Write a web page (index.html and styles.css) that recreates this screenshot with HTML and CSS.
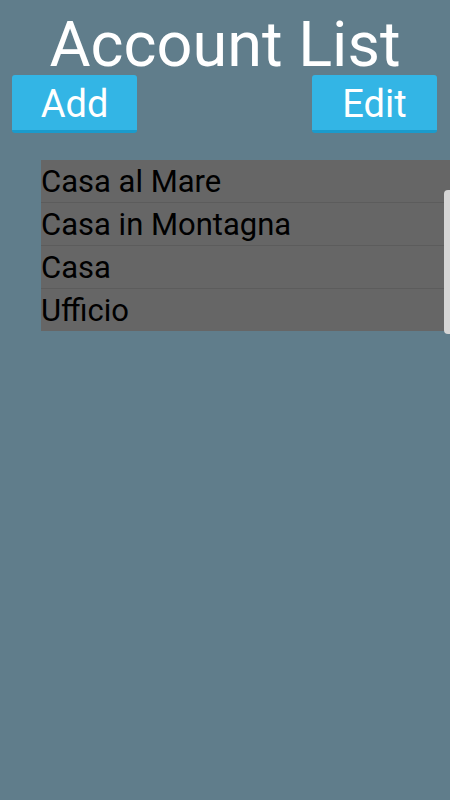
FILE: index.html
```html
<!DOCTYPE html>
<html lang="en">

<head>
    <meta charset="UTF-8">
    <meta name="viewport" content="width=device-width, initial-scale=1">
    <title>Account List</title>
    <link rel="stylesheet" href="styles.css">
</head>

<body>

    <h1 class="title">Account List</h1>

    <div class="actions">
        <button class="action-btn">Add</button>
        <button class="action-btn">Edit</button>
    </div>

    <div class="list-wrap">
        <ul class="account-list">
            <li>Casa al Mare</li>
            <li>Casa in Montagna</li>
            <li>Casa</li>
            <li>Ufficio</li>
        </ul>
        <div class="scroll-thumb"></div>
    </div>

</body>

</html>
```

FILE: styles.css
```css
html,
body {
    margin: 0;
    padding: 0;
    height: 100%;
}

body {
    font-family: Roboto, "Liberation Sans", sans-serif;
    background-color: #607d8b;
}

.title {
    margin: 0;
    padding-top: 10px;
    height: 65px;
    text-align: center;
    color: #fff;
    font-weight: normal;
    font-size: 63px;
    line-height: 70px;
}

.actions {
    display: flex;
    justify-content: space-between;
    padding: 0 13px 0 12px;
}

.action-btn {
    width: 125px;
    height: 58px;
    background-color: #33b5e5;
    color: #fff;
    border: none;
    border-bottom: 3px solid #1a9bcc;
    border-radius: 3px;
    font-family: Roboto, "Liberation Sans", sans-serif;
    font-size: 38px;
    line-height: 58px;
    padding: 0;
}

.list-wrap {
    position: relative;
    margin: 27px 0 0 41px;
}

.account-list {
    list-style: none;
    margin: 0;
    padding: 0;
    background-color: #666666;
}

.account-list li {
    height: 42px;
    line-height: 44px;
    font-size: 31px;
    color: #000;
    border-bottom: 1px solid #5c5c5c;
}

.account-list li:last-child {
    border-bottom: none;
}

.scroll-thumb {
    position: absolute;
    right: 0;
    top: 30px;
    bottom: -3px;
    width: 6px;
    background-color: #d6d6d6;
    border-radius: 4px 0 0 4px;
}
```
